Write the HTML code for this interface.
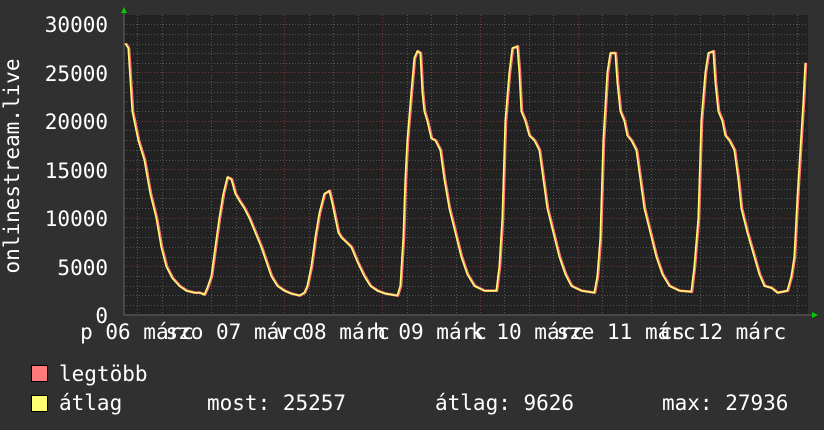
<!DOCTYPE html>
<html><head><meta charset="utf-8"><style>
html,body{margin:0;padding:0;background:#303030;}
svg{display:block;}
text{font-family:"DejaVu Sans Mono","Liberation Mono",monospace;fill:#fff;font-size:21px;}
</style></head><body>
<svg width="824" height="430" viewBox="0 0 824 430">
<defs>
<polyline id="c" vector-effect="non-scaling-stroke" fill="none" stroke-linejoin="round" points="126,28000 129,27500 133,21000 139,18000 145,16000 151,12500 157,10000 162,7000 167,5000 173,3800 180,3000 187,2500 195,2300 200,2300 205,2100 208,2800 212,4000 216,7000 220,10000 224,12500 228,14200 232,14000 236,12500 240,11800 245,11000 250,10000 256,8500 262,7000 267,5500 272,4000 278,3000 285,2500 292,2200 300,2000 305,2300 308,3000 312,5000 316,8000 320,10500 325,12500 330,12800 333,11500 336,10000 339,8500 342,8000 347,7500 352,7000 358,5500 365,4000 371,3000 378,2500 386,2200 398,2000 401,3000 404,8000 406,14000 408,18000 412,23000 415,26500 418,27200 421,27000 423,23000 425,21000 428,20000 432,18200 436,18000 441,17000 445,14000 450,11000 456,8500 462,6000 468,4200 475,3000 485,2500 497,2500 500,5000 503,10000 506,20000 510,25000 513,27500 518,27700 520,25000 522,21000 526,20000 530,18500 535,18000 540,17000 544,14000 548,11000 554,8500 560,6000 566,4200 572,3000 582,2500 595,2300 598,4000 601,8000 604,18000 608,25000 611,27000 616,27000 618,24000 621,21000 625,20000 628,18500 632,18000 637,17000 641,14000 645,11000 651,8500 657,6000 663,4200 670,3000 680,2500 692,2400 695,5000 699,10000 702,20000 706,25000 709,27000 714,27200 716,24000 719,21000 723,20000 726,18500 730,18000 735,17000 739,14000 742,11000 748,8500 755,6000 760,4200 765,3000 772,2800 778,2300 788,2500 792,4000 795,6000 798,12000 801,17000 804,22000 806,26000"/>
</defs>
<rect width="824" height="430" fill="#303030"/>
<rect x="124" y="15" width="684" height="300" fill="#222"/>
<g stroke="#555" stroke-width="1" stroke-dasharray="1,2">
<path d="M137.5 15V315M162.5 15V315M211.5 15V315M236.5 15V315M260.5 15V315M309.5 15V315M333.5 15V315M358.5 15V315M407.5 15V315M431.5 15V315M456.5 15V315M504.5 15V315M529.5 15V315M553.5 15V315M602.5 15V315M626.5 15V315M651.5 15V315M700.5 15V315M724.5 15V315M748.5 15V315M797.5 15V315"/>
<path d="M124 305.5H808M124 295.5H808M124 286.5H808M124 276.5H808M124 257.5H808M124 247.5H808M124 237.5H808M124 227.5H808M124 208.5H808M124 198.5H808M124 189.5H808M124 179.5H808M124 160.5H808M124 150.5H808M124 140.5H808M124 130.5H808M124 111.5H808M124 101.5H808M124 92.5H808M124 82.5H808M124 63.5H808M124 53.5H808M124 44.5H808M124 34.5H808M124 24.5H808"/>
</g>
<g stroke="#7a3535" stroke-width="1" stroke-dasharray="1,2">
<path d="M187.5 15V315M284.5 15V315M382.5 15V315M480.5 15V315M578.5 15V315M675.5 15V315M773.5 15V315"/>
<path d="M124 266.5H808M124 218.5H808M124 169.5H808M124 121.5H808M124 72.5H808"/>
</g>
<path d="M124 315H812M124 315V10" stroke="#666" stroke-width="1"/>
<polygon points="121,13 127,13 124,7" fill="#0c0"/>
<polygon points="812,312 812,318 818,315" fill="#0c0"/>
<g transform="translate(0,315) scale(1,-0.0097)">
<use href="#c" stroke="#ff7a7a" stroke-width="2.6"/>
<use href="#c" stroke="#ffff70" stroke-width="1.5" transform="translate(-0.8,0)"/>
</g>
<g text-anchor="end">
<text x="108" y="32">30000</text>
<text x="108" y="81">25000</text>
<text x="108" y="129">20000</text>
<text x="108" y="178">15000</text>
<text x="108" y="226">10000</text>
<text x="108" y="275">5000</text>
<text x="108" y="323">0</text>
</g>
<text transform="translate(19,166) rotate(-90)" text-anchor="middle">onlinestream.live</text>
<g text-anchor="middle">
<text x="137" y="339">p 06 márc</text>
<text x="235" y="339">szo 07 márc</text>
<text x="333" y="339">v 08 márc</text>
<text x="430" y="339">h 09 márc</text>
<text x="528" y="339">k 10 márc</text>
<text x="626" y="339">sze 11 márc</text>
<text x="723" y="339">cs 12 márc</text>
</g>
<rect x="31.5" y="365.5" width="16" height="16" fill="#ff7a7a" stroke="#000"/>
<rect x="31.5" y="395.5" width="16" height="16" fill="#ffff70" stroke="#000"/>
<text x="59" y="381">legtöbb</text>
<text x="59" y="410">átlag</text>
<text x="207" y="410">most: 25257</text>
<text x="435" y="410">átlag: 9626</text>
<text x="662" y="410">max: 27936</text>
</svg>
</body></html>
